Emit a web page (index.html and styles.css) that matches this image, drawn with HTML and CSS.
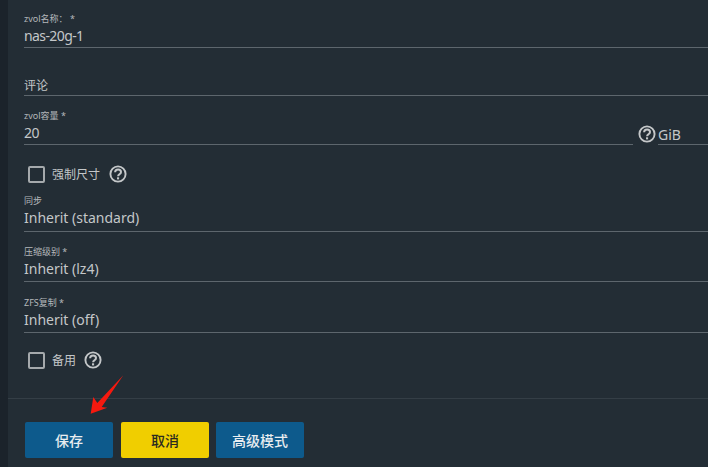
FILE: index.html
```html
<!DOCTYPE html>
<html lang="zh-CN">
<head>
    <meta charset="UTF-8">
    <title>zvol</title>
    <link rel="stylesheet" href="styles.css">
</head>
<body>

<div class="page">
    <div class="strip"></div>
    <div class="panel">
        <form class="fields">
            <div class="field field-name">
                <label class="field-label">zvol名称： *</label>
                <div class="field-value">nas-20g-1</div>
            </div>
            <div class="field field-comment">
                <div class="field-value">评论</div>
            </div>
            <div class="size-row">
                <div class="field size-main">
                    <label class="field-label">zvol容量 *</label>
                    <div class="field-value">20</div>
                </div>
                <svg class="help help-size" viewBox="0 0 18 18"><use href="#help"/></svg>
                <div class="field size-unit">
                    <div class="field-value">GiB</div>
                </div>
            </div>
            <div class="check-row check-force">
                <span class="checkbox"></span>
                <span class="check-label">强制尺寸</span>
                <svg class="help" viewBox="0 0 18 18"><use href="#help"/></svg>
            </div>
            <div class="field field-sync">
                <label class="field-label">同步</label>
                <div class="field-value">Inherit (standard)</div>
            </div>
            <div class="field field-select field-comp">
                <label class="field-label">压缩级别 *</label>
                <div class="field-value">Inherit (lz4)</div>
            </div>
            <div class="field field-select field-dedup">
                <label class="field-label">ZFS复制 *</label>
                <div class="field-value">Inherit (off)</div>
            </div>
            <div class="check-row check-spare">
                <span class="checkbox"></span>
                <span class="check-label">备用</span>
                <svg class="help" viewBox="0 0 18 18"><use href="#help"/></svg>
            </div>
        </form>
        <div class="actions">
            <button class="btn btn-blue">保存</button>
            <button class="btn btn-yellow">取消</button>
            <button class="btn btn-blue btn-adv">高级模式</button>
        </div>
    </div>
</div>

<!-- red annotation arrow -->
<svg class="arrow" viewBox="0 0 40 50" width="40" height="50">
    <path d="M33.3 8.3 L11.7 40 L17.3 40.7 L0.7 46.7 L3.3 30 L7.3 36 Z" fill="#f5190f"/>
</svg>

<svg class="defs" width="0" height="0">
    <symbol id="help" viewBox="0 0 18 18">
        <circle cx="9" cy="9" r="7.6" fill="none" stroke="#c4c7c9" stroke-width="1.9"/>
        <path d="M6.1 7.2c0-1.7 1.3-2.8 3-2.8s2.9 1 2.9 2.5c0 2.3-2.9 2.3-2.9 4.3" fill="none" stroke="#c4c7c9" stroke-width="2"/>
        <rect x="8" y="12.3" width="2.1" height="2.1" fill="#c4c7c9"/>
    </symbol>
</svg>

</body>
</html>
```

FILE: styles.css
```css
html, body {
    margin: 0;
    padding: 0;
    height: 467px;
    overflow: hidden;
}
body {
    font-family: 'Noto Sans', 'Noto Sans CJK SC', sans-serif;
    background: #232d35;
    color: #c4c7c9;
    position: relative;
}
.page {
    display: flex;
    height: 467px;
}
.strip {
    width: 8px;
    flex: none;
    background: #1b232b;
}
.panel {
    flex: 1;
    min-width: 0;
}
.fields {
    padding: 13px 0 0 16px;
    height: 399px;
    box-sizing: border-box;
    border-bottom: 1px solid #343e46;
}
.field {
    border-bottom: 1px solid #5d666d;
}
.field-label {
    display: block;
    font-size: 9px;
    line-height: 12px;
    color: #b4b8bb;
}
.field-value {
    font-size: 14px;
    line-height: 20px;
    margin-top: 1px;
}
.field-name {
    height: 34px;
}
.field-name .field-value,
.size-main .field-value {
    letter-spacing: -0.6px;
}
.field-comment {
    margin-top: 28px;
    height: 19px;
}
.field-comment .field-value {
    font-size: 12px;
    margin-top: 0;
}
.size-row {
    display: flex;
    align-items: flex-start;
    margin-top: 14px;
}
.size-main {
    width: 609px;
    flex: none;
    height: 34px;
}
.help {
    width: 18px;
    height: 18px;
    flex: none;
}
.help-size {
    margin: 15px 0 0 5px;
}
.size-unit {
    flex: 1;
    margin: 14px 0 0 2px;
    height: 20px;
}
.size-unit .field-value {
    line-height: 22px;
    margin-top: 0;
}
.check-row {
    display: flex;
    align-items: center;
    height: 20px;
}
.check-force {
    margin-top: 19px;
}
.check-spare {
    margin-top: 17px;
}
.checkbox {
    width: 13px;
    height: 13px;
    border: 2px solid #a5a9ac;
    border-radius: 2px;
    margin-left: 4px;
    flex: none;
}
.check-label {
    font-size: 12px;
    margin-left: 7px;
    margin-right: 9px;
}
.check-spare .check-label {
    margin-right: 8px;
}
.field-sync {
    margin-top: 11px;
    height: 36px;
}
.field-select {
    height: 35px;
}
.field-comp {
    margin-top: 14px;
}
.field-dedup {
    margin-top: 15px;
}
.actions {
    display: flex;
    gap: 8px;
    padding: 23px 0 0 17px;
}
.btn {
    width: 88px;
    height: 36px;
    border: none;
    border-radius: 2px;
    font-family: inherit;
    font-size: 14px;
    font-weight: 500;
    padding: 0;
}
.btn-blue {
    background: #0d5a8c;
    color: #e8edf0;
}
.btn-yellow {
    background: #f0ce00;
    color: #2a2a20;
}
.btn-adv {
    margin-left: -1px;
}
.arrow {
    position: absolute;
    left: 90px;
    top: 367px;
}
.defs {
    position: absolute;
}
```
